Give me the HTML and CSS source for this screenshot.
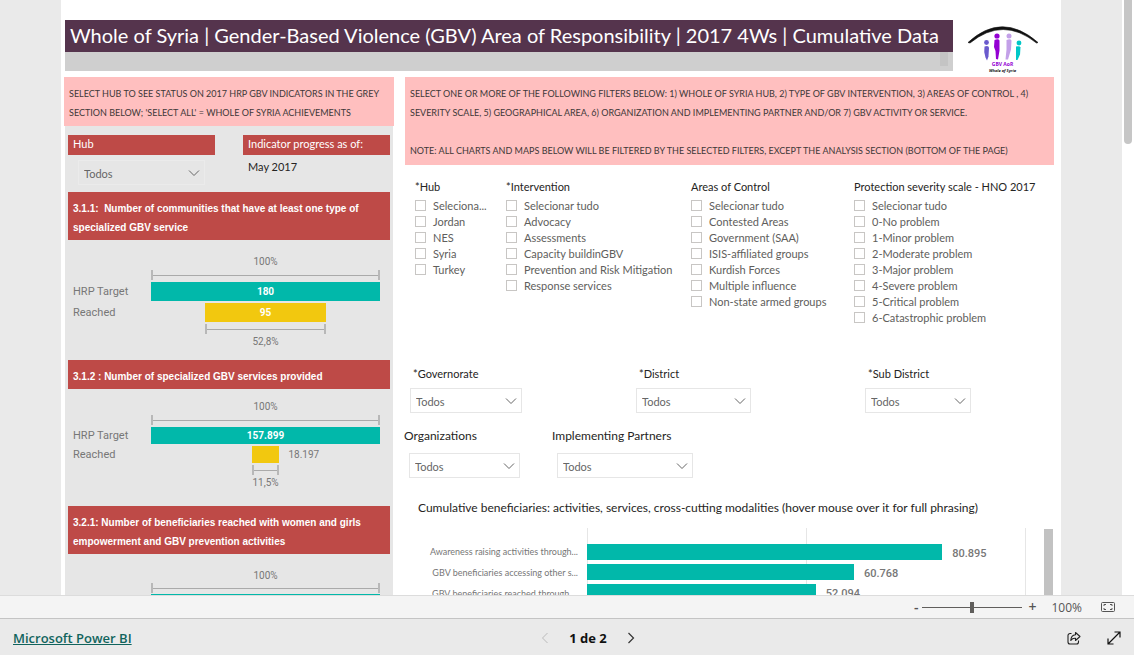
FILE: index.html
```html
<!DOCTYPE html>
<html lang="pt">
<head>
<meta charset="utf-8">
<title>Whole of Syria GBV 4Ws</title>
<link rel="stylesheet" href="styles.css">
</head>
<body>
<svg class="defs" aria-hidden="true">
  <symbol id="chevron" viewBox="0 0 12 8"><path d="M1 1.5 6 6.5 11 1.5" fill="none" stroke="#666" stroke-width="1"/></symbol>
</svg>
<main class="viewport">
  <div class="report">
    <header class="header">
      <div class="banner">
        <h1>Whole of Syria | Gender-Based Violence (GBV) Area of Responsibility | 2017 4Ws | Cumulative Data</h1>
        <div class="substrip"><span class="nub"></span></div>
      </div>
      <svg class="logo" viewBox="0 0 72 50" role="img" aria-label="GBV AoR Whole of Syria">
        <path d="M0 17.500Q34-14 70 17.500L68.500 18Q35-9 2 18z" fill="#111" stroke="#111" stroke-width=".6"/>
        <g fill="#6a5acd"><circle cx="18.500" cy="17.500" r="2.400"/><path d="M16.500 21.500q4-1.500 4.500 1l-.5 9-1.500 4-1.500-3q-2-6-1-11z"/></g>
        <g fill="#9400d3"><circle cx="29" cy="11" r="2.600"/><path d="M26.500 15q4-1.500 5 .5v10l-1.500 9-2-.5-.5-8-1.500-4z"/></g>
        <g fill="#c3a0e8"><circle cx="41" cy="11" r="2.500"/><path d="M38.500 15q4-1.500 5 .5l-.5 9-3 10h-2.500l1-10z"/></g>
        <g fill="#00c8c8"><circle cx="51" cy="18" r="2.400"/><path d="M48 21.500q4-1 4.500 1l-.5 7-2.500 5.500h-1.500v-7z"/></g>
        <text x="34.500" y="41" class="logo-name">GBV AoR</text>
        <text x="34.500" y="47" class="logo-sub">Whole of Syria</text>
      </svg>
    </header>

    <div class="columns">
      <section class="side">
        <p class="note">SELECT HUB TO SEE STATUS ON 2017 HRP GBV INDICATORS IN THE GREY SECTION BELOW; 'SELECT ALL' = WHOLE OF SYRIA ACHIEVEMENTS</p>
        <div class="panel">
          <div class="hubrow">
            <div class="hubcell">
              <label class="tag" for="hub">Hub</label>
              <div class="drop ghost"><select id="hub"><option>Todos</option></select><svg><use href="#chevron"/></svg></div>
            </div>
            <div class="hubcell">
              <div class="tag">Indicator progress as of:</div>
              <div class="date">May 2017</div>
            </div>
          </div>

          <h2 class="indicator">3.1.1:&nbsp; Number of communities that have at least one type of specialized GBV service</h2>
          <div class="funnel">
            <span class="pct">100%</span>
            <span class="bracket"></span>
            <span class="cat">HRP Target</span><span class="bar target">180</span>
            <span class="cat">Reached</span><span class="bar reached" style="width:53%">95</span>
            <span class="bracket" style="width:53%"></span>
            <span class="pct">52,8%</span>
          </div>

          <h2 class="indicator">3.1.2 : Number of specialized GBV services provided</h2>
          <div class="funnel compact">
            <span class="pct">100%</span>
            <span class="bracket"></span>
            <span class="cat">HRP Target</span><span class="bar target">157.899</span>
            <span class="cat">Reached</span><span class="bar reached" style="width:12%"></span><span class="outside">18.197</span>
            <span class="bracket" style="width:12%"></span>
            <span class="pct">11,5%</span>
          </div>

          <h2 class="indicator">3.2.1: Number of beneficiaries reached with women and girls empowerment and GBV prevention activities</h2>
          <div class="funnel last">
            <span class="pct">100%</span>
            <span class="bracket"></span>
            <span class="cat"></span><span class="bar target"></span>
          </div>
        </div>
      </section>

      <section class="content">
        <div class="note wide">
          <p>SELECT ONE OR MORE OF THE FOLLOWING FILTERS BELOW: 1) WHOLE OF SYRIA HUB, 2) TYPE OF GBV INTERVENTION, 3) AREAS OF CONTROL , 4) SEVERITY SCALE, 5) GEOGRAPHICAL AREA, 6) ORGANIZATION AND IMPLEMENTING PARTNER AND/OR 7) GBV ACTIVITY OR SERVICE.</p>
          <p class="second">NOTE: ALL CHARTS AND MAPS BELOW WILL BE FILTERED BY THE SELECTED FILTERS, EXCEPT THE ANALYSIS SECTION (BOTTOM OF THE PAGE)</p>
        </div>

        <div class="filters">
          <fieldset>
            <legend>*Hub</legend>
            <label><input type="checkbox">Seleciona...</label>
            <label><input type="checkbox">Jordan</label>
            <label><input type="checkbox">NES</label>
            <label><input type="checkbox">Syria</label>
            <label><input type="checkbox">Turkey</label>
          </fieldset>
          <fieldset>
            <legend>*Intervention</legend>
            <label><input type="checkbox">Selecionar tudo</label>
            <label><input type="checkbox">Advocacy</label>
            <label><input type="checkbox">Assessments</label>
            <label><input type="checkbox">Capacity buildinGBV</label>
            <label><input type="checkbox">Prevention and Risk Mitigation</label>
            <label><input type="checkbox">Response services</label>
          </fieldset>
          <fieldset>
            <legend>Areas of Control</legend>
            <label><input type="checkbox">Selecionar tudo</label>
            <label><input type="checkbox">Contested Areas</label>
            <label><input type="checkbox">Government (SAA)</label>
            <label><input type="checkbox">ISIS-affiliated groups</label>
            <label><input type="checkbox">Kurdish Forces</label>
            <label><input type="checkbox">Multiple influence</label>
            <label><input type="checkbox">Non-state armed groups</label>
          </fieldset>
          <fieldset>
            <legend>Protection severity scale - HNO 2017</legend>
            <label><input type="checkbox">Selecionar tudo</label>
            <label><input type="checkbox">0-No problem</label>
            <label><input type="checkbox">1-Minor problem</label>
            <label><input type="checkbox">2-Moderate problem</label>
            <label><input type="checkbox">3-Major problem</label>
            <label><input type="checkbox">4-Severe problem</label>
            <label><input type="checkbox">5-Critical problem</label>
            <label><input type="checkbox">6-Catastrophic problem</label>
          </fieldset>
        </div>

        <div class="places">
          <div class="field"><label for="gov">*Governorate</label>
            <div class="drop"><select id="gov"><option>Todos</option></select><svg><use href="#chevron"/></svg></div></div>
          <div class="field"><label for="dist">*District</label>
            <div class="drop"><select id="dist"><option>Todos</option></select><svg><use href="#chevron"/></svg></div></div>
          <div class="field"><label for="sub">*Sub District</label>
            <div class="drop"><select id="sub"><option>Todos</option></select><svg><use href="#chevron"/></svg></div></div>
        </div>

        <div class="partners">
          <div class="field"><label for="org">Organizations</label>
            <div class="drop"><select id="org"><option>Todos</option></select><svg><use href="#chevron"/></svg></div></div>
          <div class="field"><label for="imp">Implementing Partners</label>
            <div class="drop"><select id="imp"><option>Todos</option></select><svg><use href="#chevron"/></svg></div></div>
        </div>

        <h2 class="charttitle">Cumulative beneficiaries: activities, services, cross-cutting modalities (hover mouse over it for full phrasing)</h2>
        <div class="chart">
          <div class="cats">
            <span>Awareness raising activities through...</span>
            <span>GBV beneficiaries accessing other s...</span>
            <span>GBV beneficiaries reached through ...</span>
          </div>
          <div class="plot">
            <div class="row"><span class="hbar" style="width:80.9%"></span><span class="val">80.895</span></div>
            <div class="row"><span class="hbar" style="width:60.8%"></span><span class="val">60.768</span></div>
            <div class="row"><span class="hbar" style="width:52.1%"></span><span class="val">52.094</span></div>
          </div>
          <div class="chartthumb"></div>
        </div>
      </section>
    </div>
  </div>
  <div class="track"><div class="thumb"></div></div>
</main>

<div class="zoombar">
  <button aria-label="Zoom out">-</button>
  <input type="range" min="0" max="100" value="50" aria-label="Zoom">
  <button aria-label="Zoom in">+</button>
  <span class="level">100%</span>
  <button class="fit" aria-label="Fit to page">
    <svg width="14" height="10" viewBox="0 0 14 10" fill="none" stroke="#555"><rect x=".5" y=".5" width="13" height="9" rx="1"/><path d="M3 4V2.500h2M9 2.500h2V4M3 6v1.500h2M9 7.500h2V6"/></svg>
  </button>
</div>

<footer class="footer">
  <a href="#">Microsoft Power BI</a>
  <nav class="pager">
    <button aria-label="Previous page"><svg width="8" height="12" viewBox="0 0 8 12" fill="none" stroke="#bbb"><path d="M6.500 1 1.500 6l5 5"/></svg></button>
    <span>1 de 2</span>
    <button aria-label="Next page"><svg width="8" height="12" viewBox="0 0 8 12" fill="none" stroke="#333" stroke-width="1.200"><path d="M1.500 1l5 5-5 5"/></svg></button>
  </nav>
  <div class="actions">
    <button aria-label="Share"><svg width="14" height="14" viewBox="0 0 14 14" fill="none" stroke="#222" stroke-width="1.100"><path d="M4.500 2.500H3A2 2 0 0 0 1 4.500v6.500a2 2 0 0 0 2 2h6.500a2 2 0 0 0 2-2V9.500"/><path d="M8.500 1.500 13 5.500 8.500 9.500V7.300Q5.500 7 3.800 9.500 4 4.200 8.500 3.800z" stroke-linejoin="round"/></svg></button>
    <button aria-label="Full screen"><svg width="14" height="14" viewBox="0 0 14 14" fill="none" stroke="#111" stroke-width="1.200"><path d="M1 13 13 1M7.500 1H13v5.500M1 7.500V13h5.500"/></svg></button>
  </div>
</footer>
</body>
</html>
```
FILE: styles.css
```css
* { box-sizing: border-box; }
body {
  margin: 0;
  height: 100vh;
  display: flex;
  flex-direction: column;
  overflow: hidden;
  background: #eaeaea;
  color: #252423;
  font-family: Lato, "Open Sans", sans-serif;
  font-size: 11px;
}
h1, h2, p, fieldset { margin: 0; padding: 0; border: 0; font-weight: 400; }
button { border: 0; padding: 0; background: none; font: inherit; color: inherit; display: flex; }
.defs { display: none; }

.viewport { flex: 1; min-height: 0; display: flex; overflow: hidden; }
.report {
  flex: 1;
  max-width: 1000px;
  height: max-content;
  margin: 0 auto;
  padding: 20px 7px 0 3px;
  background: #fff;
}
.track { width: 12px; background: #fff; padding: 0 2px; }
.thumb { height: 144px; background: #c6c6c6; border-radius: 0 0 4px 4px; }

.header { display: flex; padding-left: 1px; height: 57px; }
.banner { flex: 1; }
.banner h1 {
  height: 32px;
  padding-left: 5px;
  background: #55344d;
  color: #fff;
  font-size: 20px;
  line-height: 31px;
  white-space: nowrap;
}
.substrip { height: 19px; background: #cfcfcf; display: flex; justify-content: flex-end; padding-right: 5px; }
.nub { width: 8px; height: 14px; background: #c4c4c4; }
.logo { width: 72px; height: 50px; margin: 5px 14px 0 15px; }
.logo-name, .logo-sub { font-family: "Open Sans", sans-serif; font-weight: 700; text-anchor: middle; }
.logo-name { font-size: 5px; fill: #9400d3; }
.logo-sub { font-size: 4px; fill: #111; font-style: italic; }

.columns { display: flex; gap: 11px; }
.side { flex: 0 0 330px; }
.content { flex: 1; min-width: 0; }
.note {
  background: #ffbfbf;
  color: #403838;
  font-size: 9px;
  line-height: 19px;
  padding: 7px 5px 4px;
}
.note.wide { padding-bottom: 5px; }
.second { margin-top: 19px; }

.panel { margin: 0 1px; padding: 9px 3px 0; background: #e6e6e6; }
.hubrow { display: flex; justify-content: space-between; }
.hubcell { width: 147px; height: 57px; }
.tag { display: block; height: 20px; padding-left: 5px; background: #be4a47; color: #fff; font-size: 11px; line-height: 17px; }
.date { padding: 3px 5px; line-height: 17px; }

.drop { display: grid; height: 25px; }
.drop > * { grid-area: 1 / 1; }
.drop select {
  appearance: none;
  width: 100%;
  border: 1px solid #e6e6e6;
  border-radius: 0;
  background: transparent;
  padding: 2px 5px 0;
  color: #666;
  font: inherit;
}
.drop svg { width: 12px; height: 8px; place-self: center end; margin-right: 5px; pointer-events: none; }
.drop.ghost { margin: 5px 10px 0; }
.drop.ghost select { border-color: #ebebeb; }

.indicator {
  padding: 7px 5px 3px;
  background: #be4a47;
  color: #fff;
  font: 700 10px/19px "Liberation Sans", sans-serif;
}
.funnel {
  display: grid;
  grid-template-columns: 78px 1fr 5px;
  grid-template-rows: 12px 10px 19px 19px 10px 12px;
  row-gap: 2px;
  padding: 16px 5px 0;
  font-family: Roboto, sans-serif;
  font-size: 10px;
  color: #777;
  height: 120px;
}
.funnel > * { grid-column: 2; justify-self: center; }
.pct { line-height: 12px; }
.bracket { width: 100%; border: solid #b8b8b8; border-width: 0 2px; background: linear-gradient(#aaa, #aaa) center / 100% 1px no-repeat; }
.funnel .cat { grid-column: 1; justify-self: start; align-self: center; font-size: 11px; }
.bar { width: 100%; color: #fff; font-weight: 700; display: flex; align-items: center; justify-content: center; }
.target { background: #01b8aa; }
.reached { background: #f2c80f; grid-row: 4; }
.funnel > .outside { grid-row: 4; justify-self: start; align-self: center; margin-left: 60%; }
.compact { grid-template-rows: 12px 10px 17px 17px 10px 12px; padding-top: 12px; height: 117px; }
.last { padding-top: 16px; height: 120px; row-gap: 1px; grid-template-rows: 12px 10px 17px 17px 10px 12px; }

.filters { display: grid; grid-template-columns: 91px 185px 163px 1fr; padding: 14px 0 0 10px; height: 201px; }
.filters legend { padding: 0; line-height: 16px; margin-bottom: 2px; white-space: nowrap; }
.filters label { display: flex; align-items: center; height: 16px; gap: 7px; color: #605e5c; white-space: nowrap; }
.filters input { appearance: none; width: 11px; height: 11px; margin: 0; border: 1px solid #c8c6c4; background: #fff; }

.field label { display: block; line-height: 16px; }
.places { display: grid; grid-template-columns: 112px 115px 106px; column-gap: 114px; padding-left: 5px; }
.places label { padding-left: 3px; margin-bottom: 6px; }
.partners { display: grid; grid-template-columns: 116px 141px; column-gap: 32px; padding-top: 15px; margin-left: -1px; font-size: 11px; }
.partners label { font-size: 12px; margin-bottom: 9px; }
.partners .drop { margin-left: 5px; }

.charttitle { padding: 21px 0 11px 13px; font-size: 12px; line-height: 18px; white-space: nowrap; }
.chart { display: flex; height: 200px; padding-right: 1px; }
.cats { width: 182px; padding: 14px 9px 0 0; text-align: right; font-size: 9px; color: #777; white-space: nowrap; }
.cats span { display: block; line-height: 20px; height: 21px; }
.plot {
  flex: 0 1 439px;
  padding-top: 16px;
  display: flex;
  flex-direction: column;
  gap: 4px;
  background:
    linear-gradient(#e6e6e6, #e6e6e6) left / 1px 100% no-repeat,
    linear-gradient(#e6e6e6, #e6e6e6) center / 1px 100% no-repeat,
    linear-gradient(#e6e6e6, #e6e6e6) right / 1px 100% no-repeat;
}
.row { display: flex; height: 16px; align-items: center; }
.hbar { height: 16px; background: #01b8aa; }
.val { padding: 2px 0 0 10px; font: 500 11px Roboto, sans-serif; color: #777; }
.chartthumb { width: 9px; margin: 1px 0 0 auto; background: #c2c2c2; }

.zoombar {
  flex: none;
  height: 24px;
  display: flex;
  align-items: center;
  justify-content: flex-end;
  padding-right: 19px;
  background: #f4f4f4;
  border-top: 1px solid #dcdcdc;
  border-bottom: 1px solid #c4c4c4;
  color: #555;
  font-family: "Open Sans", sans-serif;
  font-size: 12px;
}
.zoombar button { font-size: 14px; font-weight: 600; line-height: 18px; }
.zoombar input { appearance: none; width: 100px; height: 11px; margin: 0 6px 0 4px; background: linear-gradient(#605e5c, #605e5c) center / 100% 1px no-repeat; }
.zoombar input::-webkit-slider-thumb { appearance: none; width: 4px; height: 11px; background: #605e5c; }
.level { margin: 0 19px 0 15px; }

.footer { flex: none; height: 36px; display: grid; grid-template-columns: 1fr auto 1fr; align-items: center; padding: 2px 13px 0; background: #eaeaea; font-family: "Open Sans", sans-serif; }
.footer a { color: #11645d; font-size: 13px; font-weight: 600; justify-self: start; }
.pager { display: flex; align-items: center; gap: 20px; font-size: 13px; font-weight: 700; color: #111; margin-left: 42px; }
.actions { display: flex; justify-content: flex-end; gap: 26px; }
```
